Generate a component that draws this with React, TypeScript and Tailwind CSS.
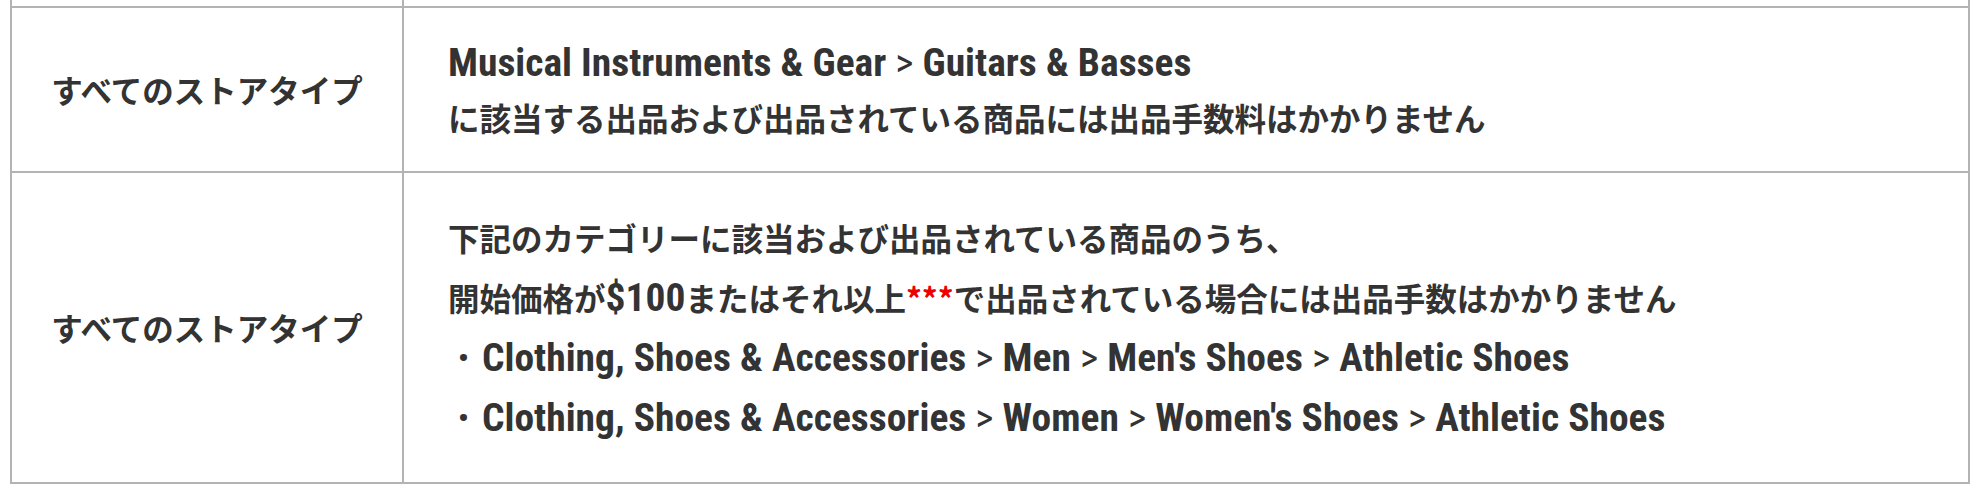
const FONT = "font-['Noto_Sans_CJK_JP','Noto_Sans',sans-serif]";
// latin runs in the reference use a tall condensed face
const LAT = "font-['Roboto','Noto_Sans_CJK_JP',sans-serif] text-[39.5px] [font-stretch:75%]";

function Gt() {
  return <span className="font-normal"> &gt; </span>;
}

function Bullet({ children }: { children: React.ReactNode }) {
  return (
    <div className="flex items-center pl-[10px]">
      <span className="w-[24px] font-['Roboto',sans-serif] text-[30px]">•</span>
      <span className={LAT}>{children}</span>
    </div>
  );
}

export default function App() {
  return (
    <div className={`bg-white w-[1978px] h-[502px] overflow-hidden ${FONT} text-[#333] font-bold text-[31.5px]`}>
      <div className="ml-[10px] w-[1960px] border-x-2 border-[#b3b3b3]">
        {/* tail of the row above */}
        <div className="grid grid-cols-[392px_1fr] h-[6px]">
          <div className="border-r-2 border-[#b3b3b3]" />
          <div />
        </div>

        <div className="grid grid-cols-[392px_1fr] h-[165px] border-t-2 border-[#b3b3b3]">
          <div className="flex items-center justify-center border-r-2 border-[#b3b3b3]">
            すべてのストアタイプ
          </div>
          <div className="flex flex-col justify-center pl-[44px] leading-[55px]">
            <p className={LAT}>
              Musical Instruments &amp; Gear<Gt />Guitars &amp; Basses
            </p>
            <p>に該当する出品および出品されている商品には出品手数料はかかりません</p>
          </div>
        </div>

        <div className="grid grid-cols-[392px_1fr] h-[313px] border-y-2 border-[#b3b3b3]">
          <div className="flex items-center justify-center border-r-2 border-[#b3b3b3]">
            すべてのストアタイプ
          </div>
          <div className="flex flex-col justify-center pl-[44px] leading-[60px]">
            <p>下記のカテゴリーに該当および出品されている商品のうち、</p>
            <p>
              開始価格が<span className={LAT}>$100</span>またはそれ以上
              <span className="text-[#e00]">***</span>で出品されている場合には出品手数はかかりません
            </p>
            <Bullet>
              Clothing, Shoes &amp; Accessories<Gt />Men<Gt />Men's Shoes<Gt />Athletic Shoes
            </Bullet>
            <Bullet>
              Clothing, Shoes &amp; Accessories<Gt />Women<Gt />Women's Shoes<Gt />Athletic Shoes
            </Bullet>
          </div>
        </div>
      </div>
    </div>
  );
}
